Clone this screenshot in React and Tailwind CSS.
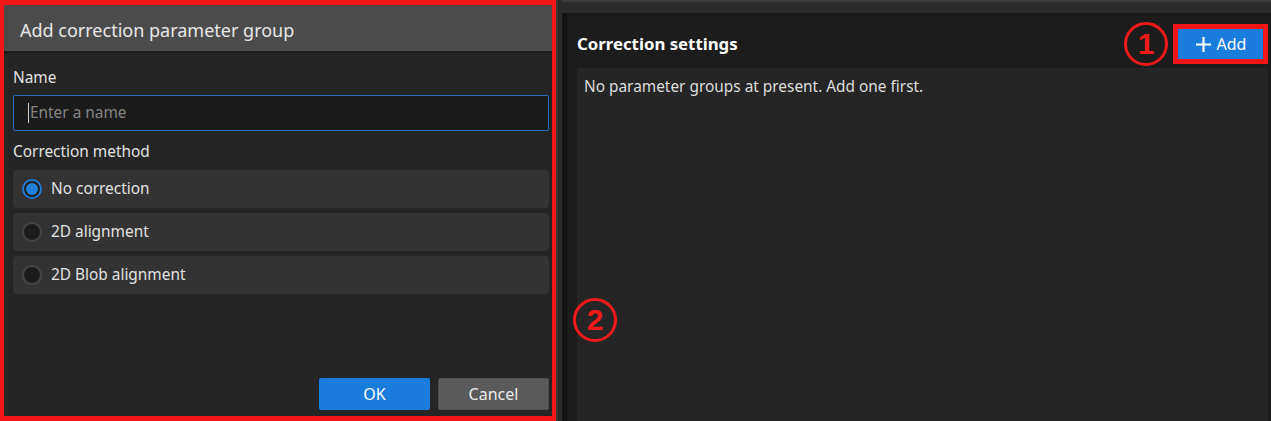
import React, { useState } from 'react';

const font = { fontFamily: '"Noto Sans", "Open Sans", sans-serif' };

const methods = ['No correction', '2D alignment', '2D Blob alignment'];

const Radio = ({ checked }) =>
  checked ? (
    <span className="flex h-[20px] w-[20px] items-center justify-center rounded-full border-2 border-[#1d7ad4] bg-[#1e1e1e]">
      <span className="h-[12px] w-[12px] rounded-full bg-[#1f80de]" />
    </span>
  ) : (
    <span className="h-[20px] w-[20px] rounded-full border-2 border-[#454545] bg-[#1c1c1c]" />
  );

const Marker = ({ n, className = '' }) => (
  <div
    className={`flex h-[44px] w-[44px] items-center justify-center rounded-full border-[3px] border-[#f01a1a] text-[30px] font-bold leading-none text-[#f01a1a] ${className}`}
    style={{ fontFamily: '"Liberation Sans", Arial, sans-serif' }}
  >
    {n}
  </div>
);

const AddGroupDialog = () => {
  const [method, setMethod] = useState(0);

  return (
    <div className="flex h-full w-[556px] shrink-0 flex-col border-x-[4px] border-y-[5px] border-[#f21616] bg-[#252525]">
      <div className="flex h-[46px] items-center bg-[#4b4b4b] pl-[16px] pt-[4px] text-[18px] text-[#e8e8e8]">
        Add correction parameter group
      </div>
      <div className="h-[2px] bg-[#1d1d1d]" />
      <div className="flex flex-1 flex-col pl-[9px] pr-[3px] pt-[15px] pb-[6px] text-[15.4px] text-[#e2e2e2]">
        <div className="leading-[20px]">Name</div>
        <div className="mt-[7px] flex h-[36px] items-center rounded-[2px] border border-[#2b6db3] bg-[#1b1b1b] pl-[14px]">
          <span className="h-[20px] w-px bg-[#d0d0d0]" />
          <span className="pl-px text-[#858585]">Enter a name</span>
        </div>
        <div className="mt-[11px] leading-[20px]">Correction method</div>
        <div className="mt-[8px] flex flex-col gap-[5px]">
          {methods.map((m, i) => (
            <div
              key={m}
              onClick={() => setMethod(i)}
              className="flex h-[38px] items-center gap-[9px] rounded-[4px] bg-[#333333] pl-[9px]"
            >
              <Radio checked={method === i} />
              <span>{m}</span>
            </div>
          ))}
        </div>
        <div className="mt-auto flex justify-end gap-[8px] text-[16px]">
          <button className="h-[32px] w-[111px] rounded-[2px] bg-[#1a7cdc] text-white">OK</button>
          <button className="h-[32px] w-[111px] rounded-[2px] border border-[#4e4e4e] bg-[#5a5a5a] text-[#ececec]">
            Cancel
          </button>
        </div>
      </div>
    </div>
  );
};

const CorrectionSettings = () => (
  <div className="relative flex flex-1 flex-col bg-[#1c1c1c] pl-[10px] pr-[3px]">
    <div className="flex h-[55px] items-center justify-between pt-[7px]">
      <span className="text-[16.8px] font-bold text-white">Correction settings</span>
      <div className="flex items-center gap-[5px]">
        <Marker n="1" />
        <div className="border-[5px] border-[#f21616]">
          <button className="flex h-[30px] w-[85px] items-center justify-center gap-[5px] bg-[#1a7cdc] text-[16px] text-white">
            <svg width="17" height="17" viewBox="0 0 17 17">
              <path d="M8.5 1v15M1 8.5h15" stroke="#fff" strokeWidth="2.2" />
            </svg>
            Add
          </button>
        </div>
      </div>
    </div>
    <div className="flex-1 bg-[#252525] pl-[7px] pt-[9px] text-[15.4px] leading-[20px] text-[#dedede]">
      No parameter groups at present. Add one first.
    </div>
    <Marker n="2" className="absolute left-[6px] top-[285px]" />
  </div>
);

export default function App() {
  return (
    <div className="flex h-[421px] w-[1271px] overflow-hidden bg-[#1e1e1e]" style={font}>
      <AddGroupDialog />
      <div className="w-[2px] bg-[#3a3a3a]" />
      <div className="w-[4px] bg-[#2b2b2b]" />
      <div className="flex flex-1 flex-col">
        <div className="h-[13px] border-t-2 border-[#3b3b3b] bg-[#2b2b2b]" />
        <div className="flex flex-1">
          <div className="w-[5px] bg-[#131313]" />
          <CorrectionSettings />
        </div>
      </div>
    </div>
  );
}
